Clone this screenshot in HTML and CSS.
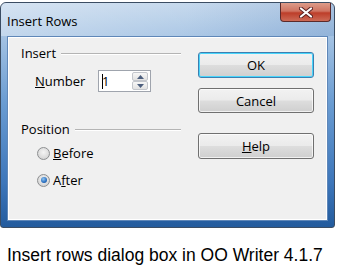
FILE: index.html
```html
<!DOCTYPE html>
<html>
<head>
<meta charset="utf-8">
<link rel="stylesheet" href="styles.css">
</head>
<body>
<div class="window">
  <div class="titlebar">
    <span class="title">Insert Rows</span>
    <div class="close">
      <svg width="14" height="11" viewBox="0 0 14 11"><path d="M2 1.5 L12 9.5 M12 1.5 L2 9.5" stroke="#5a2020" stroke-width="4" stroke-linecap="round"/><path d="M2 1.5 L12 9.5 M12 1.5 L2 9.5" stroke="#ffffff" stroke-width="2.2" stroke-linecap="round"/></svg>
    </div>
  </div>
  <div class="client">
    <div class="left">
      <div class="group-head"><span>Insert</span><div class="rule"></div></div>
      <div class="number-row">
        <span class="num-label"><u>N</u>umber</span>
        <div class="spin">
          <span class="val"><i class="caret"></i>1</span>
          <div class="spin-btns">
            <div class="sb"><svg width="7" height="4" viewBox="0 0 7 4"><path d="M0 4 L3.5 0 L7 4Z" fill="#4d5f7e"/></svg></div>
            <div class="sb"><svg width="7" height="4" viewBox="0 0 7 4"><path d="M0 0 L3.5 4 L7 0Z" fill="#4d5f7e"/></svg></div>
          </div>
        </div>
      </div>
      <div class="group-head pos"><span>Position</span><div class="rule"></div></div>
      <div class="radio-row first"><span class="radio"></span><span><u>B</u>efore</span></div>
      <div class="radio-row second"><span class="radio checked"><i></i></span><span>A<u>f</u>ter</span></div>
    </div>
    <div class="buttons">
      <div class="btn default">OK</div>
      <div class="btn cancel">Cancel</div>
      <div class="btn help"><u>H</u>elp</div>
    </div>
  </div>
</div>
<p class="caption">Insert rows dialog box in OO Writer 4.1.7</p>
</body>
</html>
```
FILE: styles.css
```css
html, body {
  margin: 0;
  padding: 0;
  background: #ffffff;
}
body {
  width: 342px;
  height: 269px;
  overflow: hidden;
  font-family: "Open Sans", "Noto Sans", sans-serif;
  font-size: 13px;
  color: #000;
}
.window {
  margin-top: 2px;
  width: 333px;
  height: 224px;
  border: 1px solid #3b4d63;
  border-radius: 6px 6px 3px 3px;
  background: linear-gradient(to bottom, #c0d5eb 0px, #a3c2e3 34px, #6a9cd2 100px, #3d76ba 180px, #235b9d 100%);
  display: flex;
  flex-direction: column;
}
.titlebar {
  height: 33px;
  display: flex;
  align-items: flex-start;
  background: linear-gradient(100deg, rgba(255,255,255,0.35) 0%, rgba(255,255,255,0.1) 55%, rgba(40,90,160,0.15) 100%);
  border-radius: 5px 5px 0 0;
}
.title {
  margin-left: 6px;
  margin-top: 9px;
  line-height: 18px;
  color: #000;
}
.close {
  margin-left: auto;
  margin-right: 3px;
  width: 51px;
  height: 19px;
  border: 1px solid #5b2a2a;
  border-top: none;
  border-radius: 0 0 4px 4px;
  background: linear-gradient(to bottom, #dd9c8a 0%, #cf7462 45%, #bd3e2a 55%, #cc6a56 100%);
  display: flex;
  align-items: center;
  justify-content: center;
  box-sizing: border-box;
}
.client {
  margin-left: 6px;
  box-sizing: border-box;
  width: 321px;
  height: 185px;
  border: 1px solid #5f87b8;
  box-shadow: inset 0 0 0 1px #ffffff;
  background: #f0f0f0;
  display: flex;
  padding: 7px 0 0 13px;
}
.left {
  width: 160px;
  display: flex;
  flex-direction: column;
}
.group-head {
  display: flex;
  align-items: center;
  height: 18px;
  line-height: 18px;
}
.group-head .rule {
  flex: 1;
  margin-left: 5px;
  height: 1px;
  background: #b4b4b4;
  border-bottom: 1px solid #ffffff;
  margin-top: 1px;
}
.number-row {
  display: flex;
  align-items: center;
  margin-top: 8px;
  height: 22px;
}
.num-label {
  width: 77px;
  padding-left: 14px;
  box-sizing: border-box;
  line-height: 18px;
}
.spin {
  width: 53px;
  height: 22px;
  border: 1px solid #9fa4ad;
  background: #fff;
  box-sizing: border-box;
  display: flex;
  align-items: center;
}
.val {
  flex: 1;
  padding-left: 3px;
  line-height: 18px;
  position: relative;
}
.caret {
  position: absolute;
  left: 3px;
  top: 2px;
  width: 1px;
  height: 15px;
  background: #000;
}
.spin-btns {
  width: 16px;
  height: 18px;
  margin-right: 2px;
  display: flex;
  flex-direction: column;
}
.sb {
  flex: 1;
  border: 1px solid #c3c6cc;
  border-radius: 2px;
  background: linear-gradient(to bottom, #f7f7f7, #e2e2e2);
  display: flex;
  align-items: center;
  justify-content: center;
}
.group-head.pos {
  margin-top: 28px;
}
.radio-row {
  display: flex;
  align-items: center;
  height: 18px;
  line-height: 18px;
  padding-left: 16px;
}
.radio-row.first { margin-top: 6px; }
.radio-row.second { margin-top: 9px; }
.radio {
  width: 13px;
  height: 13px;
  box-sizing: border-box;
  border-radius: 50%;
  border: 1px solid #8d8f91;
  background: radial-gradient(circle at 50% 40%, #f4f4f4 0%, #dcdcdc 60%, #c8c8c8 100%);
  margin-right: 3px;
  display: flex;
  align-items: center;
  justify-content: center;
}
.radio.checked i {
  width: 6px;
  height: 6px;
  border-radius: 50%;
  background: radial-gradient(circle at 40% 35%, #8fc4f0 0%, #2a6fc0 60%, #17478a 100%);
}
.buttons {
  margin-left: 17px;
  margin-top: 8px;
  width: 116px;
  display: flex;
  flex-direction: column;
}
.btn {
  height: 26px;
  box-sizing: border-box;
  border: 1px solid #707070;
  border-radius: 3px;
  background: linear-gradient(to bottom, #f2f2f2 0%, #ebebeb 48%, #dddddd 52%, #cfcfcf 100%);
  box-shadow: inset 0 0 0 1px rgba(255,255,255,0.7);
  display: flex;
  align-items: center;
  justify-content: center;
  line-height: 18px;
}
.btn.default {
  border-color: #3c7fb1;
  box-shadow: inset 0 0 0 1px #48d5fb;
}
.btn.cancel {
  margin-top: 10px;
  height: 25px;
}
.btn.help {
  margin-top: 20px;
}
.caption {
  margin: 17px 0 0 0;
  padding-left: 7px;
  font-family: "Liberation Sans", Arial, sans-serif;
  font-size: 17.5px;
  line-height: 21px;
  color: #000;
}
```
